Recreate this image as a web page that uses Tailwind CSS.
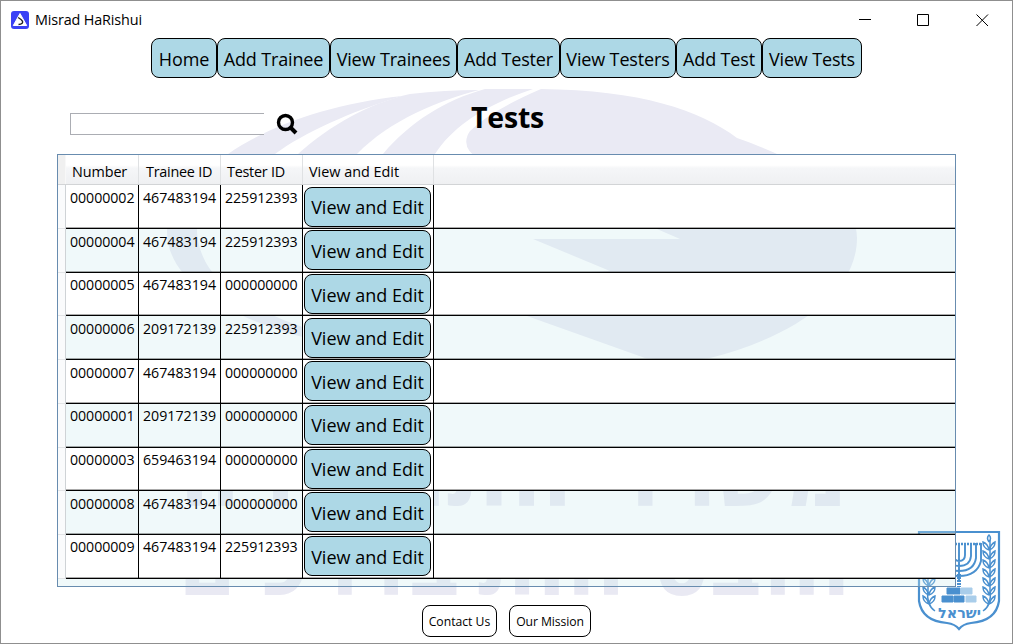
<!DOCTYPE html>
<html lang="en">
<head>
<meta charset="utf-8">
<title>Misrad HaRishui</title>
<script src="https://cdn.jsdelivr.net/npm/@tailwindcss/browser@4"></script>
</head>
<body class="bg-white">
<div class="relative isolate flex h-[644px] w-[1013px] flex-col overflow-hidden border border-[#8f8f8f] bg-white font-['Open_Sans','Noto_Sans',sans-serif] text-black">

  <!-- Watermark and state emblem behind the content -->
  <svg class="absolute -top-px -left-px -z-10 h-[644px] w-[1013px]" viewBox="0 0 1013 644">
    <g fill="#eaeaf4">
      <path d="M228 154C270 125 330 104 402 96C350 112 305 132 275 154C225 185 197 205 197 232C200 285 260 330 430 356C290 350 167 300 167 232C167 200 190 178 228 154Z"/>
      <path d="M298 154C330 125 370 103 410 94Q445 90 479 90C440 100 390 120 357 154Z"/>
      <path d="M383 154C410 122 445 100 485 89L533 89C493 102 455 123 435 154Z"/>
      <path d="M541 89C640 90 700 110 737 138C815 165 857 200 857 238C857 295 790 338 710 358Q678 362 645 358L527 316L433 280L610 271L533 239L680 239L657 229L480 160Q459 147 470 131Q490 111 541 89Z"/>
    </g>
    <g fill="#e9e9f3" font-family="DejaVu Sans" font-weight="bold" font-size="106">
      <text x="612" y="506" textLength="236" lengthAdjust="spacingAndGlyphs">משרד</text>
      <text x="178" y="506" textLength="395" lengthAdjust="spacingAndGlyphs">התחבורה</text>
      <text x="478" y="595" textLength="373" lengthAdjust="spacingAndGlyphs">והבטיחות</text>
      <text x="178" y="595" textLength="282" lengthAdjust="spacingAndGlyphs">בדרכים</text>
    </g>
    <g stroke="#4a90cf" fill="none">
      <path fill="#fff" stroke-width="2.2" d="M919 532H999V601Q996 621 971 623Q963 624 959 629Q955 624 947 623Q922 621 919 601Z"/>
      <g stroke-width="1.9">
        <path d="M959 543V580M954 543V555Q954 561 959 561Q965 561 965 555V543M948 543V557Q949 566 959 566Q970 566 971 556V543M943 543V559Q945 571 959 571Q974 571 976 558V543M937 543V561Q941 576 959 576Q977 576 981 561V543"/>
        <path stroke-width="2.4" stroke-dasharray="2 1" d="M937 544H981"/>
        <path stroke-width="4" stroke-dasharray="2 1" d="M959 574V587"/>
      </g>
      <g stroke-width="1">
        <path fill="#4a90cf" d="M947 588h13v6h-13zM942 596h11v6h-11zM954 596h10v6h-10z"/>
        <path fill="#a9cdea" stroke="#a9cdea" d="M961 588h11v6h-11zM966 596h10v6h-10z"/>
      </g>
      <g id="leaves" stroke-width="1.5">
        <path d="M983 611Q992 605 990 590V540"/>
        <path d="M989 542Q986 538 989 535Q992 538 989 542M989 550Q983 548 983 542Q988 544 989 550Q991 544 995 542Q995 548 989 550M989 559Q983 557 983 551Q988 553 989 559Q991 553 995 551Q995 557 989 559M989 568Q983 566 983 560Q988 562 989 568Q991 562 995 560Q995 566 989 568M989 577Q983 575 983 569Q988 571 989 577Q991 571 995 569Q995 575 989 577M989 586Q983 584 983 578Q988 580 989 586Q991 580 995 578Q995 584 989 586M989 595Q983 593 983 587Q988 589 989 595Q991 589 995 587Q995 593 989 595M989 604Q983 602 983 596Q988 598 989 604Q991 598 995 596Q995 602 989 604"/>
      </g>
      <use href="#leaves" transform="matrix(-1 0 0 1 1918 0)"/>
    </g>
    <text x="938" y="618" fill="#4a90cf" font-family="DejaVu Sans" font-weight="bold" font-size="14" textLength="43" lengthAdjust="spacingAndGlyphs">ישראל</text>
  </svg>

  <!-- Title bar -->
  <header class="flex h-[37px] shrink-0 items-center pl-[10px]">
    <svg class="size-[18px]" viewBox="0 0 18 18">
      <rect width="18" height="18" rx="3" fill="#3a42f5"/>
      <path d="M9 2.5L15.700 14.500H2.300Z" fill="#fff" stroke="#fff" stroke-width="1" stroke-linejoin="round"/>
      <path d="M7.200 6.500L10 8.500Q12.500 10.500 11.200 12.300Q10 13.500 7.500 13.500" fill="none" stroke="#222" stroke-width="1.300"/>
    </svg>
    <span class="ml-1.5 text-[14.4px] leading-5 tracking-[-0.15px]">Misrad HaRishui</span>
    <svg class="ml-auto mr-[23px] h-[14px] w-[130px]" viewBox="0 0 130 14" fill="none" stroke="#000">
      <path d="M0 6.500H12M58.500 1.500H69.500V12.500H58.500ZM117.500 1.500L129 13M129 1.500L117.500 13"/>
    </svg>
  </header>

  <nav class="ml-[150px] flex h-10 shrink-0 text-[18px] tracking-[-0.15px]">
    <button class="w-[66px] rounded-lg border border-black bg-[#add8e6] pt-0.5">Home</button>
    <button class="w-[113px] whitespace-nowrap rounded-lg border border-black bg-[#add8e6] pt-0.5">Add Trainee</button>
    <button class="w-[127px] whitespace-nowrap rounded-lg border border-black bg-[#add8e6] pt-0.5">View Trainees</button>
    <button class="w-[103px] whitespace-nowrap rounded-lg border border-black bg-[#add8e6] pt-0.5">Add Tester</button>
    <button class="w-[116px] whitespace-nowrap rounded-lg border border-black bg-[#add8e6] pt-0.5">View Testers</button>
    <button class="w-[86px] whitespace-nowrap rounded-lg border border-black bg-[#add8e6] pt-0.5">Add Test</button>
    <button class="w-[100px] whitespace-nowrap rounded-lg border border-black bg-[#add8e6] pt-0.5">View Tests</button>
  </nav>

  <section class="flex h-[76px] shrink-0 pl-[69px]">
    <div class="mt-[35px] h-[22px] w-[194px] border border-r-0 border-[#abadb3] bg-white"></div>
    <svg class="mt-[35px] ml-[12px] size-[22px]" viewBox="0 0 22 22" fill="none" stroke="#000">
      <circle cx="9.500" cy="9.500" r="7" stroke-width="3.400"/>
      <path d="M14.500 14.500L20 20" stroke-width="4"/>
    </svg>
    <h1 class="ml-[173px] mt-[19px] text-[28.500px] leading-10 font-bold tracking-[-0.2px]">Tests</h1>
  </section>

  <!-- Test list -->
  <main class="ml-[56px] flex h-[433px] w-[899px] shrink-0 flex-col border border-[#688caf] bg-[#cdebee]/30">
    <div class="flex h-[30px] shrink-0 border-b border-[#d2d4d6] bg-[linear-gradient(#fff_0_35%,#f5f6f8_45%,#eff0f2_100%)] text-[14.4px] leading-[29px]">
      <div class="w-2 border-r border-[#f8f8f8] bg-[#f0f0f0]"></div>
      <div class="w-[73px] border-r border-[#dfe1e3] pl-1.5 pt-0.5 tracking-[-0.1px]">Number</div>
      <div class="w-[82px] border-r border-[#dfe1e3] pl-[7px] pt-0.5 tracking-[-0.25px]">Trainee ID</div>
      <div class="w-[82px] border-r border-[#dfe1e3] pl-1.5 pt-0.5 tracking-[-0.25px]">Tester ID</div>
      <div class="w-[131px] border-r border-[#dfe1e3] pl-1.5 pt-0.5">View and Edit</div>
    </div>
    <div id="rows" class="text-[14.2px] leading-5"></div>
  </main>

  <footer class="mt-[18px] flex gap-3 pl-[421px] text-[12.200px]">
    <button class="h-8 w-[75px] rounded-lg border border-black bg-white pt-0.5">Contact Us</button>
    <button class="h-8 w-[82px] rounded-lg border border-black bg-white pt-0.5 tracking-[-0.1px]">Our Mission</button>
  </footer>
</div>
<script>
const tests = [
  ['00000002','467483194','225912393'],
  ['00000004','467483194','225912393'],
  ['00000005','467483194','000000000'],
  ['00000006','209172139','225912393'],
  ['00000007','467483194','000000000'],
  ['00000001','209172139','000000000'],
  ['00000003','659463194','000000000'],
  ['00000008','467483194','000000000'],
  ['00000009','467483194','225912393']
];
document.getElementById('rows').innerHTML = tests.map((t, i) => {
  const pad = [2, 5, 6, 8].includes(i) ? 'pt-0.5' : 'pt-[3px]';
  return `
  <div class="flex ${i === 2 || i === 6 ? 'h-[43px]' : 'h-[44px]'}">
    <div class="w-2 border-r border-b border-r-[#cfd3d6] border-b-[#e2e4e6] bg-[#fafbfc]"></div>
    <div class="flex grow border-b border-black ${i % 2 ? '' : 'bg-white'}">
      <div class="w-[73px] border-r border-black ${pad} pl-1 tracking-[-0.05px] shadow-[inset_0_-1px_#0005]">${t[0]}</div>
      <div class="w-[82px] border-r border-black ${pad} pl-1 shadow-[inset_0_-1px_#0005]">${t[1]}</div>
      <div class="w-[82px] border-r border-black ${pad} pl-1 tracking-[-0.05px] shadow-[inset_0_-1px_#0005]">${t[2]}</div>
      <div class="w-[131px] border-r border-black bg-white pl-px shadow-[inset_0_-1px_#0005] ${i === 0 || i === 3 ? 'pt-0.5' : 'pt-px'}">
        <button class="block h-10 w-[127px] whitespace-nowrap rounded-lg border border-black bg-[#add8e6] text-[18px] ${[0, 3, 5, 6].includes(i) ? 'pb-px' : 'pt-px'}">View and Edit</button>
      </div>
      <div class="grow shadow-[inset_0_-1px_#0005]"></div>
    </div>
  </div>`;
}).join('');
</script>
</body>
</html>
